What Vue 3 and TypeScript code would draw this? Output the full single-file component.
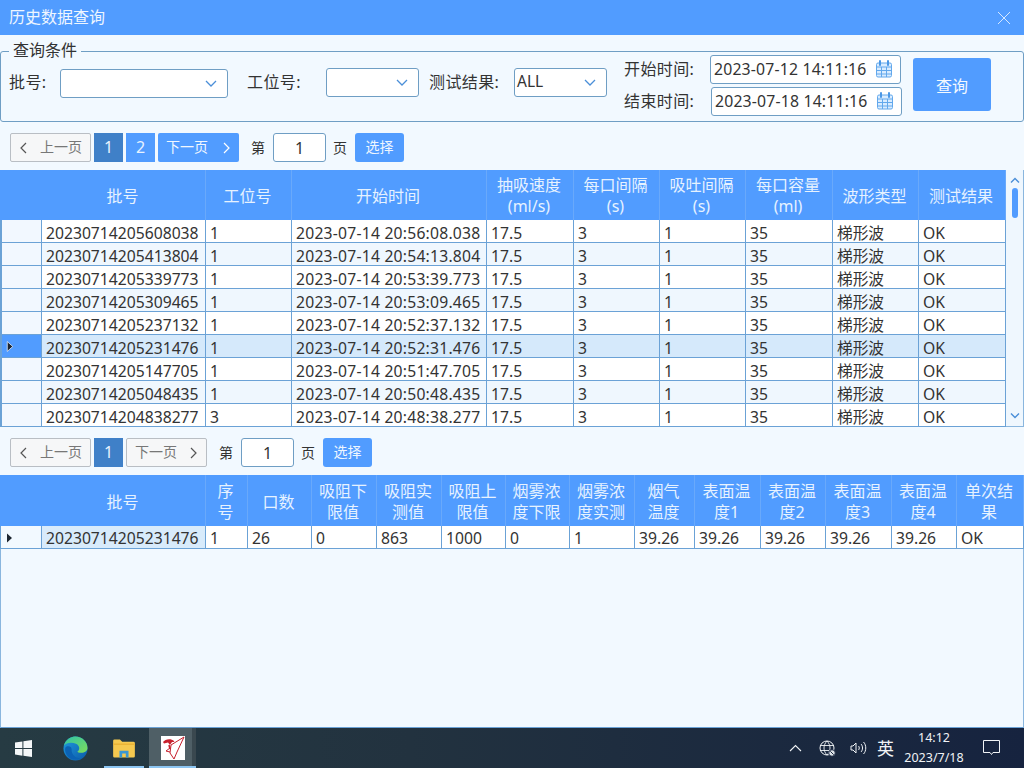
<script setup lang="ts">
const topHeaders = ['', '批号', '工位号', '开始时间', '抽吸速度\n(ml/s)', '每口间隔\n(s)', '吸吐间隔\n(s)', '每口容量\n(ml)', '波形类型', '测试结果']
const rowsData: [string, string, string][] = [
  ['20230714205608038', '1', '2023-07-14 20:56:08.038'],
  ['20230714205413804', '1', '2023-07-14 20:54:13.804'],
  ['20230714205339773', '1', '2023-07-14 20:53:39.773'],
  ['20230714205309465', '1', '2023-07-14 20:53:09.465'],
  ['20230714205237132', '1', '2023-07-14 20:52:37.132'],
  ['20230714205231476', '1', '2023-07-14 20:52:31.476'],
  ['20230714205147705', '1', '2023-07-14 20:51:47.705'],
  ['20230714205048435', '1', '2023-07-14 20:50:48.435'],
  ['20230714204838277', '3', '2023-07-14 20:48:38.277']
]
const topRows = rowsData.map(r => [...r, '17.5', '3', '1', '35', '梯形波', 'OK'])
const botHeaders = ['', '批号', '序\n号', '口数', '吸阻下\n限值', '吸阻实\n测值', '吸阻上\n限值', '烟雾浓\n度下限', '烟雾浓\n度实测', '烟气\n温度', '表面温\n度1', '表面温\n度2', '表面温\n度3', '表面温\n度4', '单次结\n果']
const botRow = ['20230714205231476', '1', '26', '0', '863', '1000', '0', '1', '39.26', '39.26', '39.26', '39.26', '39.26', 'OK']
const dates = [
  { label: '开始时间:', value: '2023-07-12 14:11:16', cls: '' },
  { label: '结束时间:', value: '2023-07-18 14:11:16', cls: 'shifted' }
]
</script>

<template>
  <div class="window">
    <header class="titlebar">
      <span class="title">历史数据查询</span>
      <svg class="close" width="14" height="14" viewBox="0 0 14 14"><path d="M1 1l12 12M13 1L1 13" stroke="#d6e8ff" stroke-width="1" fill="none" /></svg>
    </header>

    <fieldset class="query">
      <legend>查询条件</legend>
      <span class="label l1">批号:</span>
      <div class="select s1">
        <svg class="chev" width="12" height="8" viewBox="0 0 12 8"><path d="M1 1l5 5 5-5" stroke="#4b8fd8" stroke-width="1.3" fill="none" /></svg>
      </div>
      <span class="label l2">工位号:</span>
      <div class="select s2">
        <svg class="chev" width="12" height="8" viewBox="0 0 12 8"><path d="M1 1l5 5 5-5" stroke="#4b8fd8" stroke-width="1.3" fill="none" /></svg>
      </div>
      <span class="label l3">测试结果:</span>
      <div class="select s3">
        <span class="all">ALL</span>
        <svg class="chev" width="12" height="8" viewBox="0 0 12 8"><path d="M1 1l5 5 5-5" stroke="#4b8fd8" stroke-width="1.3" fill="none" /></svg>
      </div>
      <div class="dates">
        <div v-for="d in dates" :key="d.label" class="date-row">
          <span class="label date-label">{{ d.label }}</span>
          <div class="date" :class="d.cls">
            <span>{{ d.value }}</span>
            <svg width="16" height="18" viewBox="0 0 16 18">
              <rect x="0.5" y="3" width="15" height="14" rx="1.5" fill="#d9ecff" stroke="#62a8ec" />
              <path d="M1 7h14M1 10.500h14M1 14h14M5.500 7v10M10.500 7v10" stroke="#62a8ec" stroke-width="1" />
              <path d="M4 1v4M12 1v4" stroke="#4a97e6" stroke-width="2" stroke-linecap="round" />
            </svg>
          </div>
        </div>
      </div>
      <button class="search">查询</button>
    </fieldset>

    <div class="pager first">
      <div class="pg-btn off prev"><svg width="8" height="12" viewBox="0 0 8 12"><path d="M7 1L2 6l5 5" stroke="#555" stroke-width="1.2" fill="none" /></svg><span>上一页</span></div>
      <div class="pg-num cur">1</div>
      <div class="pg-num">2</div>
      <div class="pg-btn on next"><span>下一页</span><svg width="8" height="12" viewBox="0 0 8 12"><path d="M1 1l5 5-5 5" stroke="#fff" stroke-width="1.2" fill="none" /></svg></div>
      <span class="pg-text di">第</span>
      <div class="pg-input">1</div>
      <span class="pg-text ye">页</span>
      <div class="pg-go">选择</div>
    </div>

    <section class="table-top">
      <div class="grid">
        <div class="row head cols-top">
          <div v-for="(h, i) in topHeaders" :key="i" class="th" :class="{ blank: i === 0 }">{{ h }}</div>
        </div>
        <div v-for="(r, i) in topRows" :key="r[0]" class="row body cols-top" :class="{ alt: i % 2 === 1, sel: i === 5 }">
          <div class="rh">
            <svg v-if="i === 5" class="mark" width="8" height="11" viewBox="0 0 7 10"><path d="M1 0.500l5 4.500-5 4.500z" fill="#1c2530" stroke="#e8f2ff" stroke-width="0.7" /></svg>
          </div>
          <div v-for="(c, j) in r" :key="j" class="td" :class="{ stamp: j === 2 }">{{ c }}</div>
        </div>
      </div>
      <div class="scroll">
        <svg width="10" height="7" viewBox="0 0 10 7"><path d="M1 5.500l4-4 4 4" stroke="#4b8fd8" stroke-width="1.4" fill="none" /></svg>
        <div class="thumb"></div>
        <svg class="down" width="10" height="7" viewBox="0 0 10 7"><path d="M1 1.500l4 4 4-4" stroke="#4b8fd8" stroke-width="1.4" fill="none" /></svg>
      </div>
    </section>

    <div class="pager second">
      <div class="pg-btn off prev"><svg width="8" height="12" viewBox="0 0 8 12"><path d="M7 1L2 6l5 5" stroke="#555" stroke-width="1.2" fill="none" /></svg><span>上一页</span></div>
      <div class="pg-num cur">1</div>
      <div class="pg-btn off next"><span>下一页</span><svg width="8" height="12" viewBox="0 0 8 12"><path d="M1 1l5 5-5 5" stroke="#555" stroke-width="1.2" fill="none" /></svg></div>
      <span class="pg-text di">第</span>
      <div class="pg-input">1</div>
      <span class="pg-text ye">页</span>
      <div class="pg-go">选择</div>
    </div>

    <section class="table-bot">
      <div class="row head tall cols-bot">
        <div v-for="(h, i) in botHeaders" :key="i" class="th" :class="{ blank: i === 0 }">{{ h }}</div>
      </div>
      <div class="row body short cols-bot">
        <div class="rh plain">
          <svg class="mark low" width="7" height="10" viewBox="0 0 7 10"><path d="M1 0.500l5 4.500-5 4.500z" fill="#1c2530" /></svg>
        </div>
        <div v-for="(c, j) in botRow" :key="j" class="td" :class="{ picked: j === 0 }">{{ c }}</div>
      </div>
    </section>

    <footer class="taskbar">
      <svg class="win" width="17" height="17" viewBox="0 0 17 17"><path d="M0 2.600l7.400-1.100v6.600H0zM8.400 1.300L17 0v8.100H8.400zM0 9.100h7.400v6.600L0 14.600zM8.400 9.100H17V17l-8.600-1.300z" fill="#f4f7f8" /></svg>
      <div class="tb-slot edge">
        <svg width="25" height="25" viewBox="0 0 26 26">
          <defs>
            <linearGradient id="eg1" x1="0" y1="0" x2="1" y2="1"><stop offset="0" stop-color="#2fc4a8" /><stop offset="1" stop-color="#7fdc5a" /></linearGradient>
            <linearGradient id="eg2" x1="0" y1="0" x2="1" y2="1"><stop offset="0" stop-color="#1f9be0" /><stop offset="1" stop-color="#0c5aa8" /></linearGradient>
          </defs>
          <circle cx="13" cy="13" r="12.500" fill="url(#eg2)" />
          <path d="M1 10C3 3 9 .5 13 .5c7 0 12.500 5.500 12.500 12 0 3-3 5-6.500 5-2.500 0-4-.8-4-1.500 2.500-1 3-6-1.500-8C9 6 3 7 1 10z" fill="url(#eg1)" />
          <path d="M9 14c-.5 5 4 9.500 10 9-3 2-9 2.500-13-1-3-2.500-4.500-7-3.500-10C4 10 9 10 9 14z" fill="#0b62b4" />
        </svg>
      </div>
      <div class="tb-slot folder running">
        <svg width="22" height="19" viewBox="0 0 24 21">
          <path d="M0 2a1.500 1.500 0 0 1 1.500-1.500h6L10 3h12.500A1.500 1.500 0 0 1 24 4.500V19a1.500 1.500 0 0 1-1.500 1.500h-21A1.500 1.500 0 0 1 0 19z" fill="#f6c94f" />
          <path d="M0 5h24v1.500H0z" fill="#eab134" />
          <path d="M7 20.500V13h10v7.500h-3V16h-4v4.500z" fill="#3a97d4" />
        </svg>
      </div>
      <div class="tb-slot active">
        <svg class="app" width="24" height="24" viewBox="0 0 24 24">
          <rect width="24" height="24" fill="#fff" />
          <path d="M2 6c2-3 8-4 11-1 1 1-1 1-2 1L9 9 7 6.500 3 7.500z" fill="#c7202c" />
          <path d="M23 1L10 9l-1 8 4 6 3-7 7-15zM9 12l-4 3 4 1" stroke="#c7202c" stroke-width="1" fill="none" />
          <path d="M8 9l1 4" stroke="#c7202c" stroke-width="1.500" />
        </svg>
      </div>
      <div class="tb-divider"></div>
      <div class="tray">
        <svg class="ic-chev" width="13" height="8" viewBox="0 0 13 8"><path d="M1 7l5.500-5.500L12 7" stroke="#f0f3f6" stroke-width="1.1" fill="none" /></svg>
        <svg class="ic-globe" width="17" height="17" viewBox="0 0 17 17">
          <circle cx="8" cy="8" r="7" stroke="#f0f3f6" fill="none" />
          <path d="M1 5.500h14M1 10.500h14M8 1c-4 4-4 10 0 14M8 1c4 4 4 10 0 14" stroke="#f0f3f6" stroke-width="0.9" fill="none" />
          <circle cx="13" cy="13" r="3.300" fill="#dfe4e8" stroke="#1a2742" />
          <path d="M11.300 11.300l3.400 3.400" stroke="#1a2742" />
        </svg>
        <svg class="ic-vol" width="17" height="14" viewBox="0 0 17 14">
          <path d="M1 5h2l3-3v10L3 9H1z" stroke="#f0f3f6" fill="none" />
          <path d="M8.500 5c1 1 1 3 0 4M11 3c2 2 2 6 0 8M13.500 1c3 3 3 9 0 12" stroke="#f0f3f6" fill="none" />
        </svg>
        <span class="ime">英</span>
        <div class="clock"><span>14:12</span><span>2023/7/18</span></div>
        <svg class="ic-note" width="17" height="16" viewBox="0 0 17 16"><path d="M.5.500h16v12H10l-1.500 2-1.500-2H.5z" stroke="#f0f3f6" fill="none" /></svg>
      </div>
    </footer>
  </div>
</template>

<style scoped>
.window {
  width: 1024px;
  height: 768px;
  display: flex;
  flex-direction: column;
  overflow: hidden;
  background: #f2f9ff;
  font-family: "Noto Sans", "Noto Sans CJK SC", sans-serif;
  color: #333;
}
.titlebar {
  height: 35px;
  flex: none;
  background: #519cff;
  display: flex;
  align-items: center;
  justify-content: space-between;
  padding: 0 13px 0 9px;
}
.title { font-size: 16px; color: #eef6ff; margin-bottom: 3px; }
.query {
  margin: 6px 0 0;
  padding: 0;
  height: 81px;
  min-width: 0;
  flex: none;
  box-sizing: border-box;
  border: 1px solid #6f9ec4;
  border-radius: 3px;
  display: flex;
  align-items: flex-start;
}
.query legend {
  margin-left: 8px;
  padding: 0 4px;
  font-size: 16px;
  line-height: 18px;
  height: 20px;
}
.label { font-size: 16px; line-height: 22px; white-space: nowrap; letter-spacing: 0.4px; }
.l1 { margin: 10px 0 0 8px; width: 51px; flex: none; }
.l2 { margin: 10px 0 0 19px; width: 79px; flex: none; }
.l3 { margin: 10px 0 0 10px; width: 85px; flex: none; }
.select {
  position: relative;
  flex: none;
  box-sizing: border-box;
  height: 29px;
  background: #fff;
  border: 1px solid #6f9ec4;
  border-radius: 3px;
}
.s1 { width: 168px; margin-top: 8px; }
.s2 { width: 93px; margin-top: 7px; }
.s3 { width: 93px; margin-top: 7px; }
.chev { position: absolute; right: 10px; top: 10px; }
.all { position: absolute; left: 2px; top: 0; font-size: 15.5px; line-height: 24px; }
.dates { margin: -7px 0 0 17px; width: 279px; flex: none; display: flex; flex-direction: column; gap: 2px; }
.date-row { display: flex; align-items: center; height: 30px; }
.date-label { width: 86px; flex: none; }
.date {
  box-sizing: border-box;
  width: 191px;
  height: 29px;
  background: #fff;
  border: 1px solid #6f9ec4;
  border-radius: 3px;
  display: flex;
  align-items: center;
  justify-content: space-between;
  padding: 0 8px 0 3px;
  font-size: 15.8px;
  letter-spacing: 0.17px;
  white-space: nowrap;
}
.date.shifted { margin-left: 1px; }
.search {
  flex: none;
  width: 78px;
  height: 53px;
  margin: -3px 0 0 10px;
  border: none;
  border-radius: 3px;
  background: #519cff;
  color: #f4f9ff;
  font: inherit;
  font-size: 16px;
}
.pager {
  flex: none;
  height: 29px;
  margin: 11px 0 0 10px;
  display: flex;
  align-items: center;
  font-size: 14px;
}
.pg-btn {
  box-sizing: border-box;
  width: 81px;
  height: 29px;
  display: flex;
  align-items: center;
  justify-content: space-between;
  padding: 0 8px 0 8px;
  border-radius: 2px;
  margin-right: 3px;
}
.pg-btn span { margin-bottom: 3px; }
.pg-btn.off { background: #f6f7f8; border: 1px solid #b9bec4; color: #777; }
.pg-btn.on { background: #519cff; color: #f0f7ff; }
.pg-num {
  width: 29px;
  height: 29px;
  margin-right: 3px;
  background: #519cff;
  color: #e8f3ff;
  font-size: 16px;
  line-height: 29px;
  text-align: center;
}
.pg-num.cur { background: #3f80c8; }
.pg-text { font-size: 14px; color: #333; width: 14px; margin-bottom: 2px; }
.di { margin-left: 9px; }
.pg-input {
  box-sizing: border-box;
  width: 53px;
  height: 29px;
  margin: 0 7px 0 8px;
  background: #fff;
  border: 1px solid #6f9ec4;
  border-radius: 3px;
  text-align: center;
  font-size: 16px;
  line-height: 29px;
}
.pg-go {
  width: 49px;
  height: 29px;
  margin-left: 8px;
  background: #519cff;
  border-radius: 3px;
  color: #eef6ff;
  text-align: center;
  line-height: 27px;
}
.table-top {
  flex: none;
  margin-top: 8px;
  height: 257px;
  display: flex;
  overflow: hidden;
}
.grid { width: 1006px; flex: none; }
.row { display: grid; }
.cols-top { grid-template-columns: 42px 164px 86px 195px 87px 86px 86px 87px 86px 87px; }
.cols-bot { grid-template-columns: 42px 164px 42px 64px 65px 65px 64px 64px 65px 60px 66px 65px 66px 65px 67px; }
.head { height: 50px; background: #519cff; }
.head.tall { height: 51px; }
.th {
  box-sizing: border-box;
  display: flex;
  align-items: center;
  justify-content: center;
  text-align: center;
  white-space: pre-line;
  font-size: 16px;
  line-height: 21px;
  color: #e6f2ff;
  border-right: 1px solid #69a9fb;
  padding: 2px 2px 0 0;
}
.tall .th { padding-top: 3px; }
.th.blank { border-right: none; }
.body { height: 23px; background: #fff; }
.body.alt { background: #eff7fe; }
.body.sel { background: #d5e9fb; }
.body.short { height: 23px; }
.td {
  box-sizing: border-box;
  padding-left: 4px;
  font-size: 15.7px;
  line-height: 26px;
  white-space: nowrap;
  overflow: hidden;
  border-right: 1px solid #6ba2d6;
  border-bottom: 1px solid #6ba2d6;
}
.short .td { line-height: 24px; }
.td.stamp { letter-spacing: 0.22px; }
.td.picked { background: #d8ebfb; }
.rh {
  box-sizing: border-box;
  position: relative;
  background: #f2f8ff;
  border-left: 2px solid #6ba2d6;
  border-right: 1px solid #6ba2d6;
  border-bottom: 1px solid #6ba2d6;
}
.rh.plain { background: #f2f9ff; border-left-width: 1px; }
.sel .rh { background: #519cff; }
.mark { position: absolute; left: 4px; top: 6px; }
.mark.low { left: 5px; top: 7px; }
.scroll {
  flex: 1;
  box-sizing: border-box;
  background: #eff7fe;
  border-right: 1px solid #8ab6de;
  border-bottom: 1px solid #8ab6de;
  display: flex;
  flex-direction: column;
  align-items: center;
  padding-top: 7px;
}
.thumb { width: 6px; height: 30px; margin-top: 4px; border-radius: 3px; background: #519cff; }
.down { margin-top: auto; margin-bottom: 7px; }
.table-bot {
  flex: 1;
  margin-top: 8px;
  box-sizing: border-box;
  border-right: 1px solid #8ab6de;
  border-left: 1px solid #8ab6de;
  border-bottom: 1px solid #6ba2d6;
}
.table-bot .cols-bot { margin-left: -1px; }
.taskbar {
  flex: none;
  height: 40px;
  position: relative;
  display: flex;
  align-items: center;
  background: linear-gradient(90deg, #263b43 0%, #22323f 40%, #16233f 100%);
  color: #f0f3f6;
}
.win { margin-left: 15px; margin-right: 28px; flex: none; }
.tb-slot { height: 40px; flex: none; display: flex; align-items: center; justify-content: center; position: relative; box-sizing: border-box; }
.edge { width: 30px; margin-right: 14px; }
.folder { width: 40px; margin-right: 5px; }
.running::after,
.active::after {
  content: "";
  position: absolute;
  left: 0;
  right: 0;
  bottom: 0;
  height: 2px;
  background: #8cc5f2;
}
.active { width: 43px; padding-left: 5px; background: #4f5f66; }
.active::after { right: -4px; z-index: 1; }
.tb-divider { width: 4px; height: 40px; background: #3a484f; }
.tray { margin-left: auto; display: flex; align-items: center; height: 40px; }
.ic-chev { margin-right: 17px; }
.ic-globe { margin-right: 14px; }
.ic-vol { margin-right: 10px; }
.ime { font-size: 17px; margin-right: 10px; margin-bottom: 2px; }
.clock {
  display: flex;
  flex-direction: column;
  align-items: center;
  width: 60px;
  font-size: 12.5px;
  line-height: 20px;
  margin-right: 19px;
}
.ic-note { margin-right: 24px; }
</style>

<style>
html, body { margin: 0; padding: 0; }
</style>
